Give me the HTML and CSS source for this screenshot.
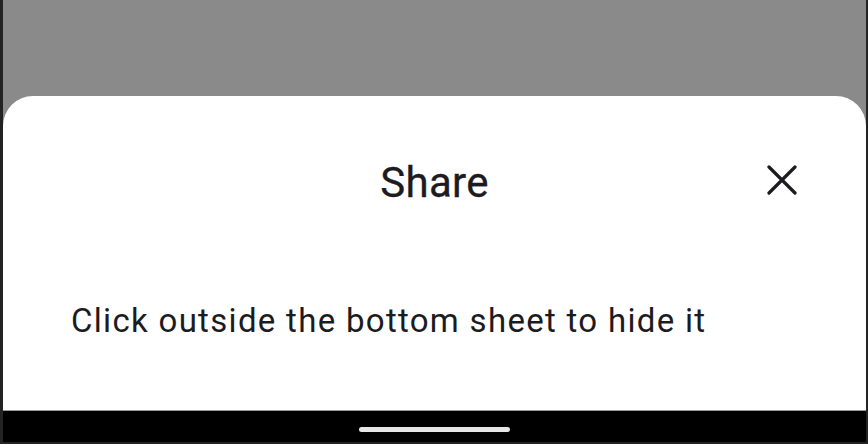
FILE: index.html
```html
<!DOCTYPE html>
<html>
<head>
<meta charset="utf-8">
<link rel="stylesheet" href="styles.css">
</head>
<body>
<div class="screen">
  <div class="stage">
    <div class="sheet">
      <div class="sheet-header">
        <div class="title">Share</div>
        <button class="close" aria-label="Close">
          <svg width="30" height="30" viewBox="0 0 30 30"><path d="M2 2 L28 28 M28 2 L2 28" stroke="#1c1b1f" stroke-width="3.2" stroke-linecap="round"/></svg>
        </button>
      </div>
      <p class="message">Click outside the bottom sheet to hide it</p>
    </div>
  </div>
  <div class="navbar"><div class="handle"></div></div>
</div>
</body>
</html>
```
FILE: styles.css
```css
html, body {
  margin: 0;
  padding: 0;
  width: 868px;
  height: 444px;
  overflow: hidden;
  background: #232323;
}
.screen {
  box-sizing: border-box;
  width: 868px;
  height: 444px;
  padding: 0 2px 2px 3px;
  display: flex;
  flex-direction: column;
  background: #232323;
}
.stage {
  flex: 1;
  display: flex;
  flex-direction: column;
  background: #8a8a8a;
  padding-top: 96px;
}
.sheet {
  flex: 1;
  background: #ffffff;
  border-radius: 30px 30px 0 0;
  position: relative;
  font-family: Roboto, "Noto Sans", sans-serif;
  color: #1c1b1f;
  border-bottom: 1px solid #9a9a9a;
  padding-top: 62px;
}
.sheet-header {
  display: flex;
  justify-content: center;
}
.title {
  font-size: 42px;
  font-weight: 400;
  line-height: 50px;
  letter-spacing: 0.3px;
  -webkit-text-stroke: 0.3px #1c1b1f;
}
.close {
  position: absolute;
  right: 69px;
  top: 69px;
  width: 30px;
  height: 30px;
  padding: 0;
  border: none;
  background: none;
}
.message {
  margin: 93px 0 0 68px;
  font-size: 33px;
  letter-spacing: 1.3px;
  line-height: 40px;
}
.navbar {
  height: 31px;
  flex: none;
  background: #000;
  display: flex;
  align-items: center;
  justify-content: center;
}
.handle {
  width: 151px;
  height: 5px;
  border-radius: 3px;
  background: #e6e6e6;
  margin-top: 6px;
}
```
